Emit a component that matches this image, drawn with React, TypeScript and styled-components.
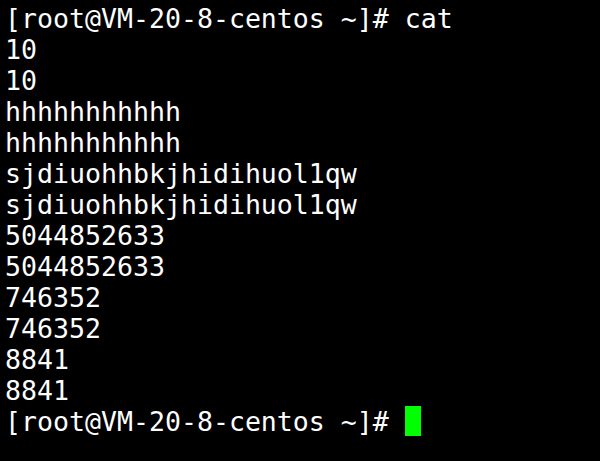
import React from "react";
import styled, { createGlobalStyle } from "styled-components";

const Global = createGlobalStyle`
  html, body {
    margin: 0;
    padding: 0;
    background: #000;
  }
  #root {
    height: 461px;
  }
`;

const Terminal = styled.div`
  box-sizing: border-box;
  width: 600px;
  height: 461px;
  background: #000000;
  color: #ffffff;
  font-family: "DejaVu Sans Mono", "Liberation Mono", monospace;
  font-size: 26.57px;
  line-height: 31px;
  padding: 3px 0 0 5px;
  overflow: hidden;
  display: flex;
  flex-direction: column;
`;

const Line = styled.div`
  white-space: pre;
  height: 31px;
  display: flex;
  align-items: stretch;
`;

const Cursor = styled.span`
  display: inline-block;
  width: 16px;
  height: 30px;
  margin-top: 0px;
  background: #00ff00;
`;

const prompt = "[root@VM-20-8-centos ~]# ";

const output = [
  "10",
  "10",
  "hhhhhhhhhhh",
  "hhhhhhhhhhh",
  "sjdiuohhbkjhidihuol1qw",
  "sjdiuohhbkjhidihuol1qw",
  "5044852633",
  "5044852633",
  "746352",
  "746352",
  "8841",
  "8841",
];

export default function App() {
  return (
    <>
      <Global />
      <Terminal>
        <Line>{prompt + "cat"}</Line>
        {output.map((l, i) => (
          <Line key={i}>{l}</Line>
        ))}
        <Line>
          <span>{prompt}</span>
          <Cursor />
        </Line>
      </Terminal>
    </>
  );
}
